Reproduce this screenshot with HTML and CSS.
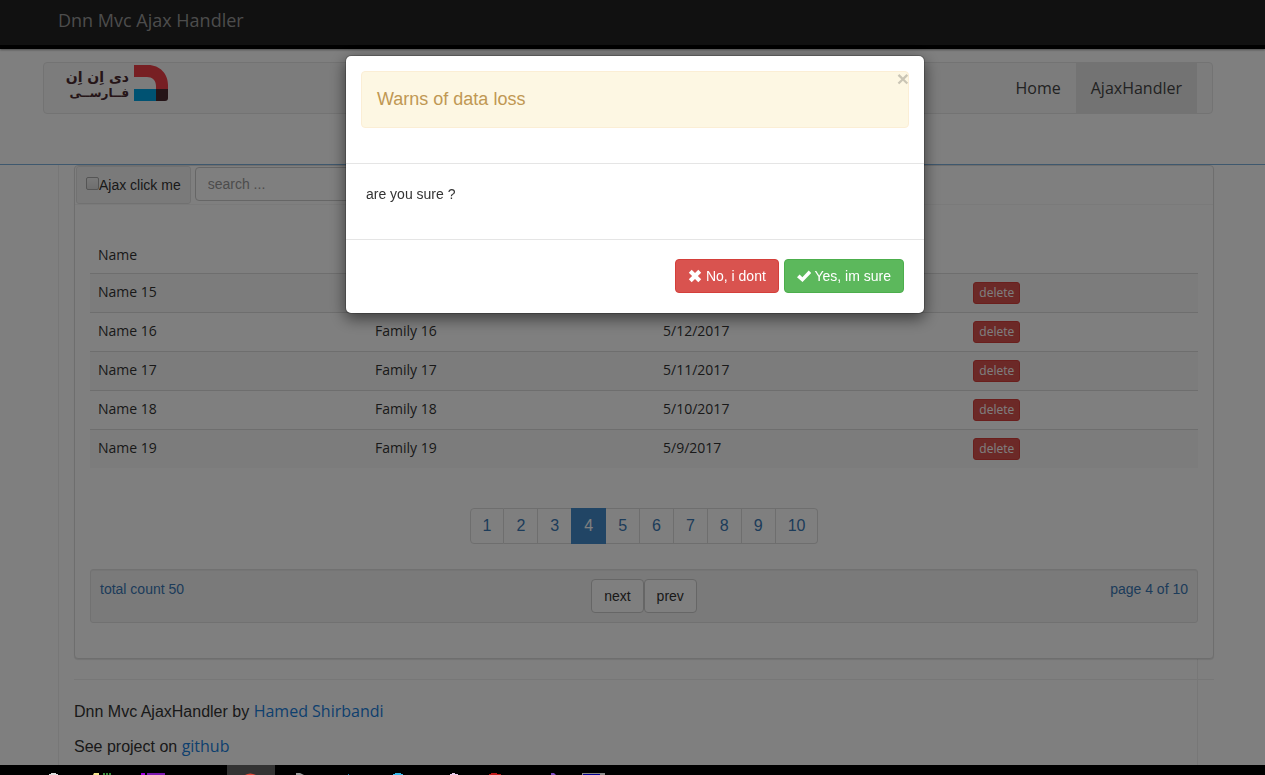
FILE: index.html
```html
<!DOCTYPE html>
<html lang="en">
<head>
<meta charset="utf-8">
<title>Dnn Mvc Ajax Handler</title>
<link rel="stylesheet" href="styles.css">
</head>
<body>
<div class="page">
  <header class="topbar">
    <div class="container"><span class="brand">Dnn Mvc Ajax Handler</span></div>
  </header>
  <div class="masthead">
    <div class="container">
      <nav class="navbar">
        <svg class="logo" width="108" height="40" viewBox="0 0 108 40" role="img" aria-label="DNN Farsi">
          <text class="logo-line" x="65" y="18" font-size="14" direction="rtl">دی اِن اِن</text>
          <text class="logo-line" x="65" y="33" font-size="12" direction="rtl">فــارســی</text>
          <path fill="#ee3e46" d="M70 1h14c12 0 20 9 20 20v4H92v-3c0-6-4-9-9-9H70z"/>
          <path fill="#00a4e4" d="M70 25h22v12H70z"/>
          <path fill="#4a2a30" d="M92 25h12v9q0 3-3 3h-9z"/>
        </svg>
        <ul class="menu">
          <li><a href="#home">Home</a></li>
          <li class="active"><a href="#ajax">AjaxHandler</a></li>
        </ul>
      </nav>
    </div>
  </div>
  <div class="container content">
    <main class="frame">
      <section class="panel">
        <div class="panel-heading">
          <label class="toggle"><input type="checkbox">Ajax click me</label>
          <input class="search" type="text" placeholder="search ..." aria-label="search">
        </div>
        <div class="panel-body">
          <table class="grid">
            <thead><tr><th class="c-name">Name</th><th class="c-family">Family</th><th class="c-date">Date</th><th class="c-action"></th></tr></thead>
            <tbody>
              <tr><td>Name 15</td><td>Family 15</td><td>5/13/2017</td><td><button class="btn-delete">delete</button></td></tr>
              <tr><td>Name 16</td><td>Family 16</td><td>5/12/2017</td><td><button class="btn-delete">delete</button></td></tr>
              <tr><td>Name 17</td><td>Family 17</td><td>5/11/2017</td><td><button class="btn-delete">delete</button></td></tr>
              <tr><td>Name 18</td><td>Family 18</td><td>5/10/2017</td><td><button class="btn-delete">delete</button></td></tr>
              <tr><td>Name 19</td><td>Family 19</td><td>5/9/2017</td><td><button class="btn-delete">delete</button></td></tr>
            </tbody>
          </table>
          <ul class="pagination">
            <li><a href="#1">1</a></li><li><a href="#2">2</a></li><li><a href="#3">3</a></li><li class="current"><a href="#4">4</a></li><li><a href="#5">5</a></li><li><a href="#6">6</a></li><li><a href="#7">7</a></li><li><a href="#8">8</a></li><li><a href="#9">9</a></li><li><a href="#10">10</a></li>
          </ul>
          <div class="pager">
            <span>total count 50</span>
            <div class="pager-buttons"><button class="btn">next</button><button class="btn">prev</button></div>
            <span class="pager-info">page 4 of 10</span>
          </div>
        </div>
      </section>
      <footer class="credits">
        <p>Dnn Mvc AjaxHandler by <a href="#author">Hamed Shirbandi</a></p>
        <p>See project on <a href="#github">github</a></p>
      </footer>
    </main>
  </div>
</div>

<div class="backdrop">
  <div class="modal" role="dialog" aria-modal="true" aria-labelledby="modal-title">
    <div class="modal-header">
      <div class="alert">
        <h4 id="modal-title">Warns of data loss</h4>
        <button class="close" aria-label="Close">×</button>
      </div>
    </div>
    <div class="modal-body"><p>are you sure ?</p></div>
    <div class="modal-footer">
      <button class="btn btn-danger"><svg width="14" height="14" viewBox="0 0 14 14" aria-hidden="true"><path fill="#fff" d="M3.700.8 7 4.100 10.300.8l2.900 2.900L9.900 7l3.300 3.300-2.900 2.900L7 9.900l-3.300 3.300L.8 10.300 4.100 7 .8 3.700z"/></svg> No, i dont</button>
      <button class="btn btn-success"><svg width="14" height="14" viewBox="0 0 14 14" aria-hidden="true"><path fill="#fff" d="M0 8.200 2.600 5.600 5.400 8.200 11.700 1.600 14.200 4 5.500 13z"/></svg> Yes, im sure</button>
    </div>
  </div>
</div>

<div class="taskbar">
  <svg width="640" height="10" viewBox="0 0 640 10" aria-hidden="true">
    <path fill="#333" d="M227 0h48v10h-48z"/>
    <path fill="#ddd" d="M49 9h2V8h5v1h2v1h-9z"/>
    <path fill="#f5e58c" d="M94 8h5v2h-6z"/><path fill="#388e3c" d="M103 8h2v2h-2zM106 8h2v2h-2zM109 8h2v2h-2z"/>
    <path fill="#a000e0" d="M141 8h4v2h-4z"/><path fill="#7b18b0" d="M147 8h18v2h-18z"/>
    <path fill="#e04a3a" d="M245 10q5-3 11 0z"/>
    <path fill="#999" d="M296 8h4l4 2h-8z"/>
    <path fill="#1b86c0" d="M348 9h1v1h-1z"/>
    <path fill="#35b6ea" d="M393 9h2V8h6v1h2v1h-10z"/>
    <path fill="#eacbea" d="M450 9h2V8h3v1h3v1h-8z"/>
    <path fill="#c01818" d="M489 9h2V8h6v1h4v1h-12z"/>
    <path fill="#7a4cc0" d="M551 8h3l2 2h-5z"/>
    <path fill="#888" d="M582 8h23v2h-23z"/><path fill="#000090" d="M583 9h17v1h-17z"/>
  </svg>
</div>
</body>
</html>
```
FILE: styles.css
```css
* { box-sizing: border-box; }
body {
  margin: 0;
  height: 100vh;
  display: flex;
  flex-direction: column;
  overflow: hidden;
  background: #fff;
  color: #333;
  font: 14px/20px "Liberation Sans", Arial, sans-serif;
}
button, input { font: inherit; color: inherit; }
button { cursor: pointer; }
a { text-decoration: none; }
ul { list-style: none; margin: 0; padding: 0; }

.page {
  flex: 1;
  min-height: 0;
  display: flex;
  flex-direction: column;
  overflow: hidden;
}
.topbar, .masthead, .content { flex-shrink: 0; }
.container {
  width: 100%;
  max-width: 1170px;
  margin: 0 auto;
}
.topbar {
  padding: 10px 9px 15px 0;
  background: #222;
  border-bottom: 4px solid #020202;
  box-shadow: 0 1px 2px rgba(0, 0, 0, .4);
}
.brand {
  display: block;
  padding: 0 15px;
  color: #999;
  font: 18px/20px "Open Sans", sans-serif;
}
.masthead {
  padding: 13px 9px 50px 0;
  border-bottom: 1px solid #7db0dc;
}
.navbar {
  display: flex;
  justify-content: space-between;
  padding: 0 15px 0 20px;
  background: #f8f8f8;
  border: 1px solid #e7e7e7;
  border-radius: 4px;
}
.logo { margin-top: 1px; }
.logo-line {
  fill: #4a2a30;
  font-family: "DejaVu Sans", sans-serif;
  font-weight: bold;
}
.menu { display: flex; }
.menu a {
  display: block;
  padding: 15px;
  color: #444;
  font: 16px/20px "Open Sans", sans-serif;
}
.menu .active { background: #e7e7e7; }

.page > .content {
  flex: 1 0 auto;
  max-width: 1179px;
  display: flex;
  padding: 0 24px 0 15px;
}
.frame {
  flex: 1;
  padding-left: 15px;
  border: solid #eee;
  border-width: 0 1px;
}
.panel, .credits { margin-right: -17px; }
.panel {
  background: #fff;
  border: 1px solid #ddd;
  border-radius: 4px;
  box-shadow: 0 1px 1px rgba(0, 0, 0, .1);
}
.panel-heading {
  display: flex;
  align-items: flex-start;
  gap: 4px;
  padding-left: 1px;
  border-bottom: 1px solid #f5f5f5;
}
.toggle {
  display: flex;
  align-items: center;
  padding: 8px 9px;
  background: #f5f5f5;
  border: 1px solid #e3e3e3;
  border-radius: 3px;
}
.toggle input {
  appearance: none;
  width: 13px;
  height: 13px;
  margin: 0 0 3px;
  border: 1px solid #aaa;
  border-radius: 2px;
  background: linear-gradient(#f4f4f4, #ddd);
}
.search {
  width: 260px;
  height: 34px;
  margin-top: 1px;
  padding: 6px 12px;
  background: #fff;
  border: 1px solid #ccc;
  border-radius: 4px;
}
.search::placeholder { color: #999; }
.panel-body { padding: 32px 15px 35px; }

.grid {
  width: 100%;
  table-layout: fixed;
  border-collapse: separate;
  border-spacing: 0;
  font-family: "Open Sans", sans-serif;
}
.grid th, .grid td {
  padding: 8px;
  text-align: left;
  vertical-align: top;
  font-weight: 400;
}
.grid td { height: 39px; border-top: 1px solid #ddd; }
.grid tbody tr:nth-child(odd) { background: #f9f9f9; }
.c-name { width: 25%; }
.c-family { width: 26%; }
.c-date { width: 28%; }
.btn-delete {
  display: block;
  padding: 1px 5px;
  color: #fff;
  background: #d9534f;
  border: 1px solid #d43f3a;
  border-radius: 3px;
  font-size: 12px;
  line-height: 18px;
}

.pagination {
  display: flex;
  justify-content: center;
  margin: 40px 0 25px;
}
.pagination a {
  display: block;
  padding: 6px 12px;
  color: #3a78b4;
  border: 1px solid #ddd;
  border-left-width: 0;
  font-size: 16px;
  line-height: 22px;
}
.pagination li:first-child a { border-left-width: 1px; border-radius: 4px 0 0 4px; }
.pagination li:last-child a { border-radius: 0 4px 4px 0; }
.pagination .current a {
  margin-left: -1px;
  padding-left: 13px;
  color: #fff;
  background: #428bca;
  border-color: #428bca;
}
.pager {
  display: grid;
  grid-template-columns: 1fr auto 1fr;
  padding: 9px;
  color: #3a78b4;
  background: #f5f5f5;
  border: 1px solid #e3e3e3;
  border-radius: 3px;
  box-shadow: inset 0 1px 1px rgba(0, 0, 0, .05);
}
.pager-buttons { display: flex; }
.pager-info { text-align: right; }
.btn {
  padding: 6px 12px;
  color: #333;
  background: #fff;
  border: 1px solid #ccc;
  border-radius: 4px;
}
.btn svg { vertical-align: -2px; }
.credits {
  margin-top: 20px;
  padding-top: 22px;
  border-top: 1px solid #eee;
  font-size: 16px;
}
.credits p { margin: 0 0 15px; }
.credits a {
  color: #1a80dd;
  font-family: "Open Sans", sans-serif;
  line-height: 16px;
}

.backdrop {
  position: fixed;
  inset: 0;
  padding: 55px 0 0 5px;
  background: rgba(0, 0, 0, .5);
}
.modal {
  max-width: 580px;
  margin: 0 auto;
  background: #fff;
  background-clip: padding-box;
  border: 1px solid rgba(0, 0, 0, .2);
  border-radius: 6px;
  box-shadow: 0 5px 15px rgba(0, 0, 0, .5);
}
.modal-header { padding: 15px 15px 35px; border-bottom: 1px solid #e5e5e5; }
.alert {
  position: relative;
  padding: 17px 15px 18px;
  color: #c09853;
  background: #fdf7e3;
  border: 1px solid #fbeed5;
  border-radius: 4px;
}
.alert h4 { margin: 0; font-size: 18px; font-weight: 400; line-height: 20px; }
.close {
  position: absolute;
  top: -4px;
  right: -1px;
  padding: 0;
  color: #000;
  background: none;
  border: 0;
  opacity: .2;
  font-size: 21px;
  font-weight: bold;
  line-height: 21px;
}
.modal-body { padding: 20px 20px 35px; }
.modal-body p { margin: 0; }
.modal-footer {
  display: flex;
  justify-content: flex-end;
  gap: 5px;
  padding: 19px 20px 20px;
  border-top: 1px solid #e5e5e5;
}
.btn-danger { color: #fff; background: #d9534f; border-color: #d43f3a; }
.btn-success { color: #fff; background: #5cb85c; border-color: #4cae4c; }

.taskbar {
  position: relative;
  flex: none;
  height: 10px;
  background: #000;
}
.taskbar svg { display: block; }
```
